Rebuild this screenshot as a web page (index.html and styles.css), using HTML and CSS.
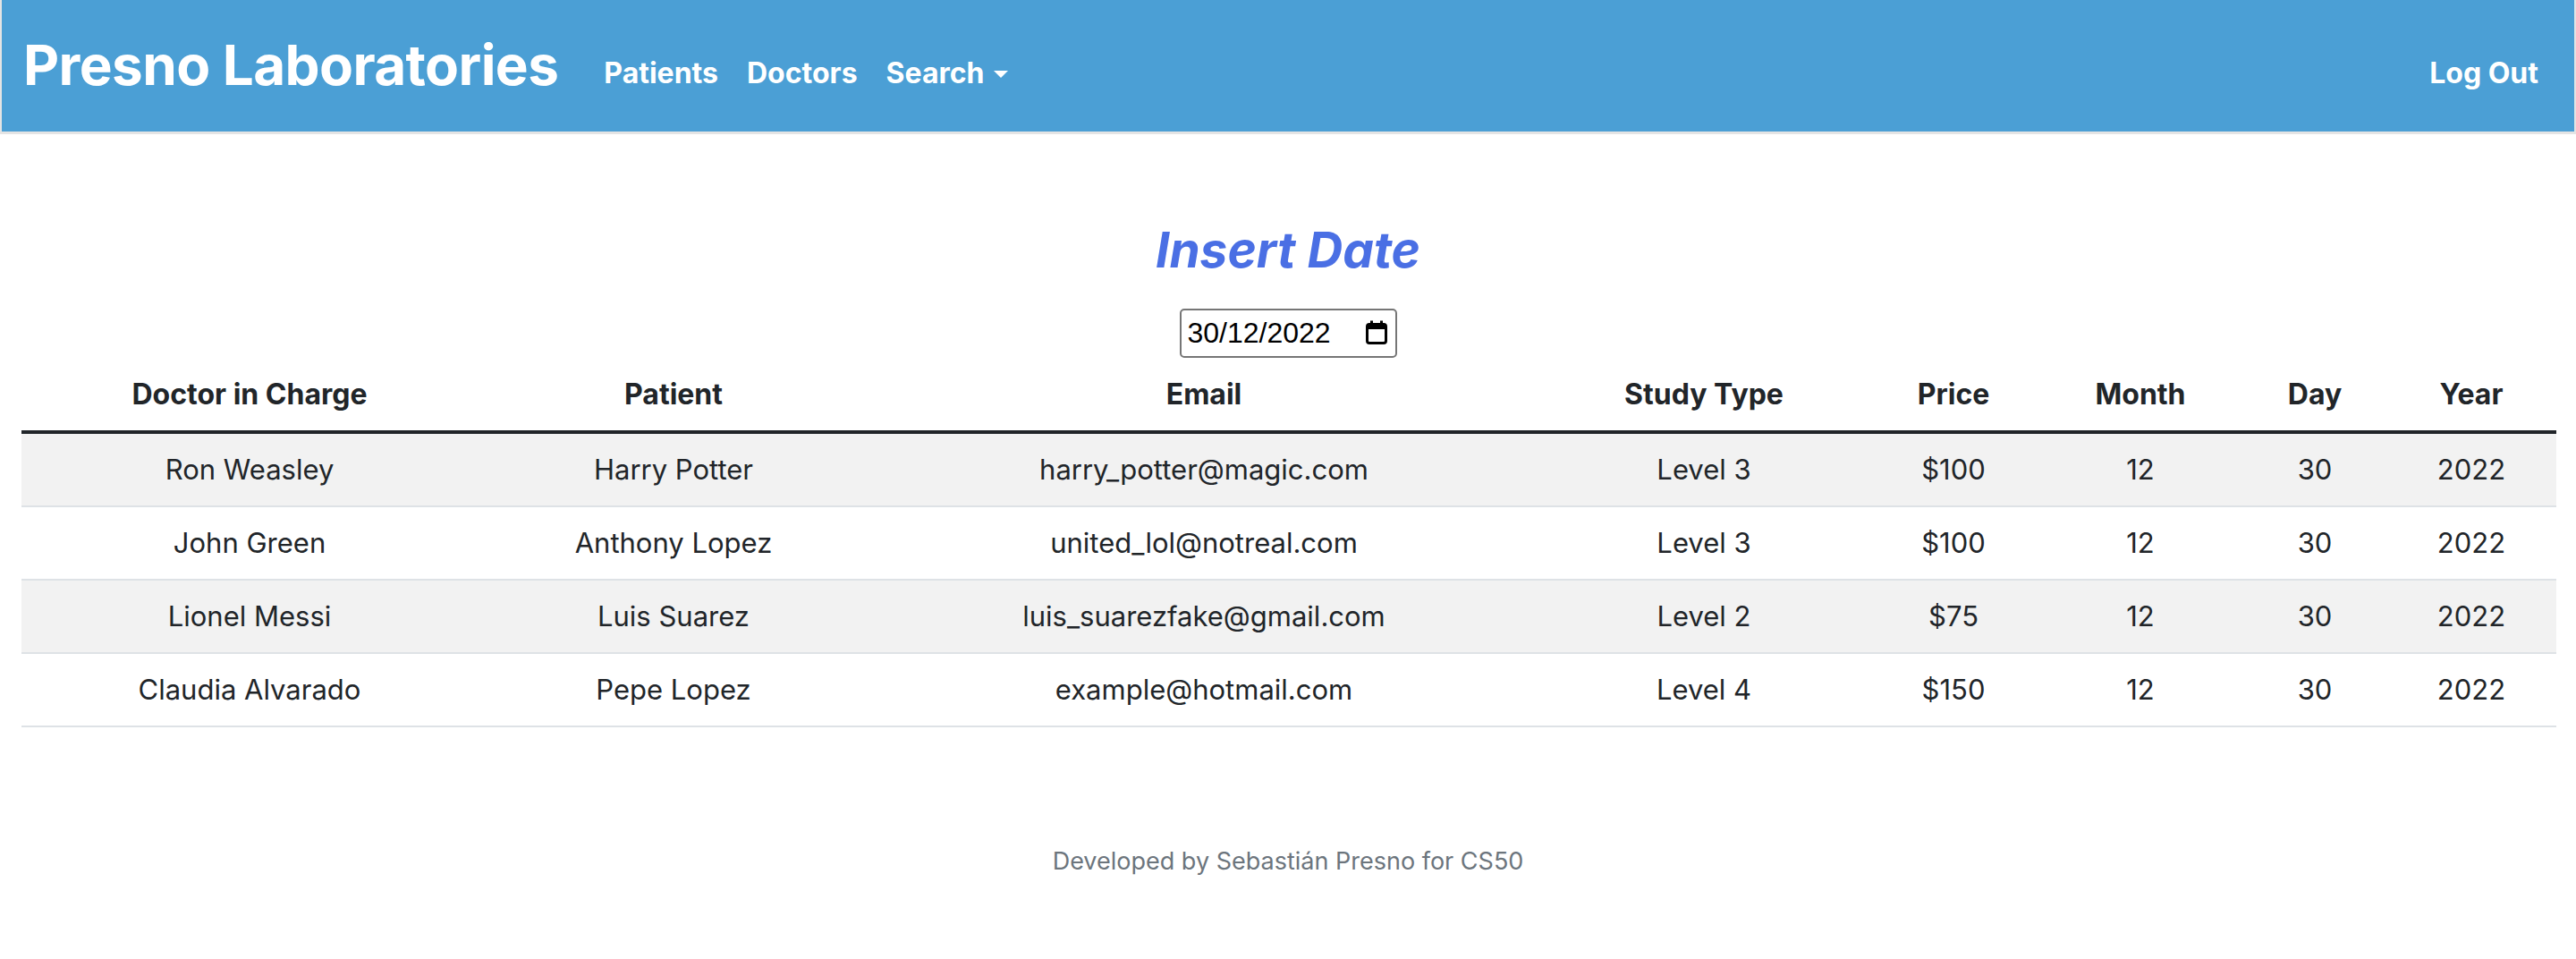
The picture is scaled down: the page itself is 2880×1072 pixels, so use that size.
FILE: index.html
```html
<!DOCTYPE html>
<html lang="en">
<head>
<meta charset="utf-8">
<title>Presno Laboratories</title>
<link rel="stylesheet" href="styles.css">
</head>
<body>
<nav class="navbar">
  <a class="brand" href="#">Presno Laboratories</a>
  <ul class="nav-links">
    <li><a class="nav-link" href="#">Patients</a></li>
    <li><a class="nav-link" href="#">Doctors</a></li>
    <li><a class="nav-link dropdown" href="#">Search<span class="caret"></span></a></li>
  </ul>
  <ul class="nav-links nav-right">
    <li><a class="nav-link" href="#">Log Out</a></li>
  </ul>
</nav>
<main class="main">
  <h3 class="title">Insert Date</h3>
  <div class="date-wrap">
    <div class="date-input">
      <span class="date-text">30/12/2022</span>
      <svg class="cal-icon" width="24" height="27" viewBox="0 0 24 27" aria-hidden="true">
        <rect x="1.5" y="4.5" width="21" height="21" rx="2.5" fill="none" stroke="#000" stroke-width="3"/>
        <rect x="1.5" y="4.5" width="21" height="5.5" fill="#000"/>
        <rect x="5" y="0.5" width="3" height="5" fill="#000"/>
        <rect x="16" y="0.5" width="3" height="5" fill="#000"/>
      </svg>
    </div>
  </div>
  <table class="data-table">
    <colgroup>
      <col class="c-doctor"><col class="c-patient"><col class="c-email"><col class="c-study">
      <col class="c-price"><col class="c-month"><col class="c-day"><col class="c-year">
    </colgroup>
    <thead>
      <tr><th>Doctor in Charge</th><th>Patient</th><th>Email</th><th>Study Type</th><th>Price</th><th>Month</th><th>Day</th><th>Year</th></tr>
    </thead>
    <tbody>
      <tr><td>Ron Weasley</td><td>Harry Potter</td><td>harry_potter@magic.com</td><td>Level 3</td><td>$100</td><td>12</td><td>30</td><td>2022</td></tr>
      <tr><td>John Green</td><td>Anthony Lopez</td><td>united_lol@notreal.com</td><td>Level 3</td><td>$100</td><td>12</td><td>30</td><td>2022</td></tr>
      <tr><td>Lionel Messi</td><td>Luis Suarez</td><td>luis_suarezfake@gmail.com</td><td>Level 2</td><td>$75</td><td>12</td><td>30</td><td>2022</td></tr>
      <tr><td>Claudia Alvarado</td><td>Pepe Lopez</td><td>example@hotmail.com</td><td>Level 4</td><td>$150</td><td>12</td><td>30</td><td>2022</td></tr>
    </tbody>
  </table>
</main>
<footer class="footer">Developed by Sebastián Presno for CS50</footer>
</body>
</html>
```
FILE: styles.css
```css
* { box-sizing: border-box; }
html, body { margin: 0; padding: 0; background: #fff; }
body {
  font-family: Inter, "Noto Sans", "DejaVu Sans", sans-serif;
  color: #212529;
}
.navbar {
  display: flex;
  align-items: center;
  height: 150px;
  background: #4b9fd5;
  border-left: 2px solid #e4e4e4;
  border-right: 2px solid #e4e4e4;
  border-bottom: 3px solid #e4e4e4;
  padding: 0 24px;
}
.brand {
  color: #fff;
  text-decoration: none;
  font-weight: 700;
  font-size: 62px;
  line-height: 1.2;
  margin-right: 35px;
  letter-spacing: -0.6px;
}
.nav-links {
  list-style: none;
  display: flex;
  margin: 0;
  padding: 17px 0 0 0;
}
.nav-right { margin-left: auto; }
.nav-link {
  display: block;
  color: #fff;
  text-decoration: none;
  font-weight: 700;
  font-size: 32px;
  line-height: 48px;
  padding: 0 16px;
}
.caret {
  display: inline-block;
  margin-left: 11px;
  vertical-align: 6px;
  border-top: 8px solid #fff;
  border-left: 8px solid transparent;
  border-right: 8px solid transparent;
}
.main { padding: 0 24px; }
.title {
  margin: 96px 0 32px 0;
  text-align: center;
  font-size: 55px;
  line-height: 67px;
  font-weight: 700;
  font-style: italic;
  color: #4a6fe4;
}
.date-wrap {
  display: flex;
  justify-content: center;
}
.date-input {
  display: flex;
  align-items: center;
  width: 243px;
  height: 55px;
  border: 2px solid #767676;
  border-radius: 5px;
  padding: 0 9px 0 7px;
  font-family: "Liberation Sans", Arial, sans-serif;
  font-size: 32px;
  color: #000;
}
.date-text { flex: 1; }
.cal-icon { display: block; margin-top: -2px; }
.data-table {
  width: 100%;
  margin-top: 1px;
  border-collapse: collapse;
  table-layout: fixed;
  font-size: 31px;
  line-height: 48px;
  text-align: center;
}
.c-doctor { width: 510px; }
.c-patient { width: 438px; }
.c-email { width: 748px; }
.c-study { width: 370px; }
.c-price { width: 188px; }
.c-month { width: 230px; }
.c-day { width: 160px; }
.c-year { width: 190px; }
.data-table th {
  font-weight: 700;
  font-size: 32px;
  padding: 16px;
  border-bottom: 4px solid #212529;
}
.data-table td {
  padding: 16px;
  border-bottom: 2px solid #dee2e6;
}
.data-table tbody tr:nth-child(odd) td { background: #f2f2f2; }
.footer {
  margin-top: 129px;
  text-align: center;
  font-size: 27px;
  line-height: 42px;
  color: #6c757d;
}
```
